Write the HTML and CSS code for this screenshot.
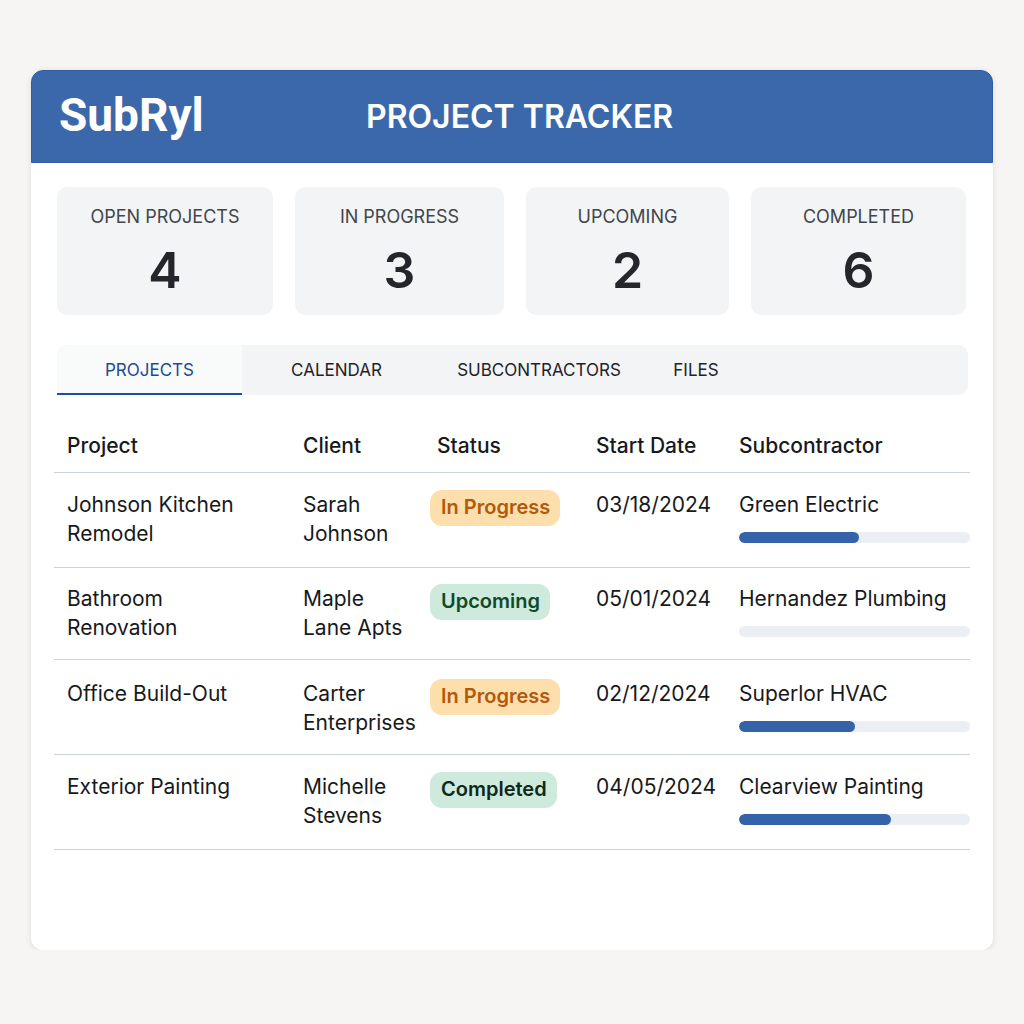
FILE: index.html
```html
<!DOCTYPE html>
<html lang="en">

<head>
  <meta charset="UTF-8">
  <meta name="viewport" content="width=device-width, initial-scale=1.0">
  <title>SubRyl - Project Tracker</title>
  <link rel="stylesheet" href="styles.css">
</head>

<body>
  <div class="container">
    <div class="header">
      <div class="logo">SubRyl</div>
      <h1 class="title">PROJECT TRACKER</h1>
    </div>

    <div class="content">
      <div class="stats">
        <div class="stat stat-open">
          <div class="stat-label">OPEN PROJECTS</div>
          <div class="stat-value">4</div>
        </div>
        <div class="stat stat-progress">
          <div class="stat-label">IN PROGRESS</div>
          <div class="stat-value">3</div>
        </div>
        <div class="stat stat-upcoming">
          <div class="stat-label">UPCOMING</div>
          <div class="stat-value">2</div>
        </div>
        <div class="stat stat-completed">
          <div class="stat-label">COMPLETED</div>
          <div class="stat-value">6</div>
        </div>
      </div>

      <div class="tabs">
        <a class="tab tab-active">PROJECTS</a>
        <a class="tab tab-calendar">CALENDAR</a>
        <a class="tab tab-subs">SUBCONTRACTORS</a>
        <a class="tab tab-files">FILES</a>
      </div>

      <table class="projects">
        <thead>
          <tr>
            <th class="col-project">Project</th>
            <th class="col-client">Client</th>
            <th class="col-status">Status</th>
            <th class="col-date">Start Date</th>
            <th class="col-sub">Subcontractor</th>
          </tr>
        </thead>
        <tbody>
          <tr class="row-a">
            <td class="col-project">Johnson Kitchen<br>Remodel</td>
            <td class="col-client">Sarah<br>Johnson</td>
            <td class="col-status"><span class="badge badge-orange">In Progress</span></td>
            <td class="col-date">03/18/2024</td>
            <td class="col-sub">Green Electric
              <div class="progress-bar"><span style="width: 52%"></span></div>
            </td>
          </tr>
          <tr class="row-b">
            <td class="col-project">Bathroom<br>Renovation</td>
            <td class="col-client">Maple<br>Lane Apts</td>
            <td class="col-status"><span class="badge badge-green">Upcoming</span></td>
            <td class="col-date">05/01/2024</td>
            <td class="col-sub">Hernandez Plumbing
              <div class="progress-bar"><span style="width: 0%"></span></div>
            </td>
          </tr>
          <tr class="row-c">
            <td class="col-project">Office Build-Out</td>
            <td class="col-client">Carter<br>Enterprises</td>
            <td class="col-status"><span class="badge badge-orange">In Progress</span></td>
            <td class="col-date">02/12/2024</td>
            <td class="col-sub">Superlor HVAC
              <div class="progress-bar"><span style="width: 50%"></span></div>
            </td>
          </tr>
          <tr class="row-a">
            <td class="col-project">Exterior Painting</td>
            <td class="col-client">Michelle<br>Stevens</td>
            <td class="col-status"><span class="badge badge-green badge-done">Completed</span></td>
            <td class="col-date">04/05/2024</td>
            <td class="col-sub">Clearview Painting
              <div class="progress-bar"><span style="width: 66%"></span></div>
            </td>
          </tr>
        </tbody>
      </table>
    </div>
  </div>
</body>

</html>
```

FILE: styles.css
```css
body {
  font-family: 'Inter', 'Liberation Sans', sans-serif;
  background-color: #f6f5f4;
  margin: 0;
  padding: 70px 31px 0;
  color: #17191c;
}

.container {
  background-color: #ffffff;
  border-radius: 12px;
  box-shadow: 0 1px 6px rgba(0, 0, 0, 0.1);
  height: 880px;
}

.header {
  background-color: #3b68aa;
  border: 1px solid #2f5ea6;
  border-radius: 12px 12px 0 0;
  box-sizing: border-box;
  height: 93px;
  display: flex;
  align-items: center;
  color: #ffffff;
  padding-left: 27px;
}

.logo {
  font-family: 'Roboto', sans-serif;
  font-size: 46px;
  font-weight: 700;
  width: 307px;
  margin-top: -4px;
}

.title {
  font-size: 32px;
  font-weight: 600;
  margin: 0;
}

.content {
  padding: 24px 23px 0;
}

/* Stat cards */
.stats {
  display: flex;
  gap: 22px;
  padding: 0 2px 0 3px;
}

.stat {
  background-color: #f3f4f6;
  border-radius: 10px;
  height: 128px;
  box-sizing: border-box;
  padding-top: 19px;
  text-align: center;
}

.stat-open { width: 216px; }
.stat-progress { width: 209px; }
.stat-upcoming { width: 203px; }
.stat-completed { width: 215px; }

.stat-label {
  font-size: 18px;
  line-height: 22px;
  color: #42454b;
}

.stat-value {
  font-size: 50px;
  line-height: 60px;
  font-weight: 600;
  margin-top: 12px;
  color: #23262b;
}

/* Tabs */
.tabs {
  display: flex;
  height: 50px;
  margin: 30px 2px 0 3px;
  background-color: #f3f4f6;
  border-radius: 10px;
  font-size: 17px;
}

.tab {
  line-height: 50px;
  color: #1f2328;
  text-align: center;
  box-sizing: border-box;
}

.tab-active {
  width: 185px;
  color: #1d4a97;
  background-color: #f9fafa;
  border-bottom: 2px solid #1d4f9f;
  border-radius: 10px 0 0 0;
}

.tab-calendar { width: 189px; }
.tab-subs { width: 216px; }
.tab-files { width: 98px; }

/* Table */
.projects {
  border-collapse: collapse;
  table-layout: fixed;
  width: 916px;
  margin-top: 23px;
  font-size: 21px;
  line-height: 29px;
}

.projects th {
  font-weight: 500;
  text-align: left;
  height: 54px;
  padding: 0;
  border-bottom: 1px solid #ccd3da;
}

.projects td {
  vertical-align: top;
  padding: 17px 0 0;
  border-bottom: 1px solid #ccd3da;
}

.row-a td { height: 77px; }
.row-b td { height: 75px; padding-top: 16px; }
.row-c td { height: 75px; padding-top: 19px; }

.col-project { width: 249px; padding-left: 13px !important; box-sizing: border-box; }
.col-client { width: 127px; }
.col-status { width: 159px; }
.col-date { width: 143px; }

.projects th.col-status { padding-left: 7px; }

.badge {
  display: inline-block;
  border-radius: 12px;
  padding: 3px 10px 4px 11px;
  font-weight: 600;
  font-size: 20px;
}

.badge-orange {
  background-color: #fddfae;
  color: #b3590a;
}

.badge-green {
  background-color: #cdeadd;
  color: #0f4a2a;
}

.badge-done {
  color: #10281c;
}

.progress-bar {
  width: 231px;
  height: 11px;
  background-color: #ebeef3;
  border-radius: 6px;
  margin-top: 13px;
  overflow: hidden;
}

.progress-bar span {
  display: block;
  height: 100%;
  background-color: #3563aa;
  border-radius: 6px;
}
```
